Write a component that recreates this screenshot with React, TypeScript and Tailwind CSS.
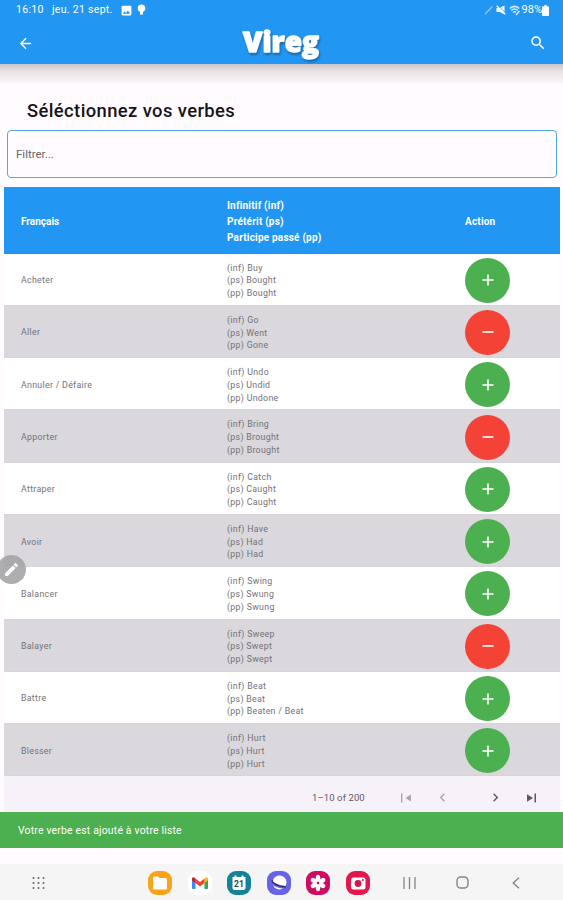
import { MdArrowBack, MdChevronLeft, MdChevronRight, MdEdit, MdImage, MdSearch } from "react-icons/md";

const verbs = [
  { fr: "Acheter", inf: "Buy", ps: "Bought", pp: "Bought", added: false },
  { fr: "Aller", inf: "Go", ps: "Went", pp: "Gone", added: true },
  { fr: "Annuler / Défaire", inf: "Undo", ps: "Undid", pp: "Undone", added: false },
  { fr: "Apporter", inf: "Bring", ps: "Brought", pp: "Brought", added: true },
  { fr: "Attraper", inf: "Catch", ps: "Caught", pp: "Caught", added: false },
  { fr: "Avoir", inf: "Have", ps: "Had", pp: "Had", added: false },
  { fr: "Balancer", inf: "Swing", ps: "Swung", pp: "Swung", added: false },
  { fr: "Balayer", inf: "Sweep", ps: "Swept", pp: "Swept", added: true },
  { fr: "Battre", inf: "Beat", ps: "Beat", pp: "Beaten / Beat", added: false },
  { fr: "Blesser", inf: "Hurt", ps: "Hurt", pp: "Hurt", added: false },
];

function StatusBar() {
  return (
    <div className="flex h-5 items-center justify-between pl-4 pr-[14px] text-[10.5px]">
      <div className="flex items-center">
        <span className="w-9 whitespace-nowrap tracking-[0.3px]">16:10</span>
        <span className="w-[68px] whitespace-nowrap tracking-[0.3px]">jeu. 21 sept.</span>
        <MdImage size={13} />
        <svg className="ml-1" width="9" height="12" viewBox="0 0 9 12" fill="currentColor">
          <circle cx="4.5" cy="4.3" r="3.8" />
          <path d="M3 7h3v3.6H3z" />
        </svg>
      </div>
      <div className="flex items-center">
        <svg width="10" height="10" viewBox="0 0 10 10" stroke="currentColor" strokeWidth="1.2" opacity="0.5">
          <path d="M1 9 8.5 1.5" />
        </svg>
        <svg className="ml-[2px]" width="10" height="10" viewBox="0 0 10 10" fill="currentColor">
          <path d="M.5 3h2.8L8.5.5v9L4 7H.5z" />
          <path d="M1.5 0 10 8.5" stroke="#2196f3" strokeWidth="1" />
          <path d="M.7.8 9.3 9.3" stroke="currentColor" strokeWidth="1.2" />
        </svg>
        <svg className="ml-[3px]" width="12" height="11" viewBox="0 0 12 11" fill="none" stroke="currentColor" strokeWidth="1.5" opacity="0.8">
          <path d="M.7 3.5Q5.5-.8 10.3 3.5M2.3 5.4q3.2-2.7 6.4 0M4 7.3q1.5-1.2 3 0" />
          <path d="m7 10 3.5-4" />
        </svg>
        <span className="ml-px text-[11px]">98%</span>
        <svg width="7" height="11" viewBox="0 0 6 11" preserveAspectRatio="none" fill="currentColor">
          <path d="M2 0h2v1.2h1q1 0 1 1V10q0 1-1 1H1q-1 0-1-1V2.2q0-1 1-1h1z" />
        </svg>
      </div>
    </div>
  );
}

function Header() {
  return (
    <header className="h-16 shrink-0 bg-[#2196f3] text-white">
      <StatusBar />
      <div className="flex h-[46px] items-center justify-between pl-[17px] pr-4">
        <MdArrowBack size={17} />
        <svg
          className="overflow-visible drop-shadow-[1px_2px_1px_rgba(20,70,120,0.6)]"
          width="84"
          height="36"
          viewBox="0 0 84 36"
        >
          <text
            x="3"
            y="27"
            textLength="76"
            lengthAdjust="spacing"
            className="fill-white stroke-white font-['Open_Sans'] text-[28px] font-extrabold"
            strokeWidth="1.4"
            strokeLinejoin="round"
          >
            Vireg
          </text>
        </svg>
        <MdSearch size={18} />
      </div>
    </header>
  );
}

function ActionButton({ added }: { added: boolean }) {
  return (
    <button
      className={`flex size-[45px] items-center justify-center rounded-full ${added ? "bg-[#f44336]" : "bg-[#4caf50]"}`}
      aria-label={added ? "Retirer" : "Ajouter"}
    >
      <svg width="12" height="12" viewBox="0 0 12 12" stroke="#fff" strokeWidth="1.6">
        <path d={added ? "M.5 6h11" : "M.5 6h11M6 .5v11"} />
      </svg>
    </button>
  );
}

function Pagination() {
  return (
    <div className="flex h-9 items-center bg-[#f7f2fa] pt-[7px] pl-[308px] text-[#5c5a5f]">
      <span className="w-[89px] text-[9.5px] tracking-[0.1px]">1–10 of 200</span>
      <svg className="opacity-50" width="11" height="10" viewBox="0 0 11 10" fill="currentColor">
        <path d="M0 .5h1.4v9H0zM10 1.5v7L4.5 5z" />
      </svg>
      <MdChevronLeft className="ml-[22px] opacity-50" size={17} />
      <MdChevronRight className="ml-[36px]" size={17} />
      <svg className="ml-[22px]" width="11" height="10" viewBox="0 0 11 10" fill="currentColor">
        <path d="M1 1.2v7.6L7 5zM8.5.5H10v9H8.5z" />
      </svg>
    </div>
  );
}

function VerbTable() {
  return (
    <div className="ml-1 mr-[3px] mt-[9px] shrink-0">
      <div className="grid h-[66.5px] grid-cols-[206px_238px_1fr] items-center bg-[#2196f3] pl-[17px] pt-[3px] text-[10px] font-bold text-white">
        <span>Français</span>
        <div className="leading-[15.7px] tracking-[0.2px]">
          <p>Infinitif (inf)</p>
          <p>Prétérit (ps)</p>
          <p>Participe passé (pp)</p>
        </div>
        <span className="tracking-[0.2px]">Action</span>
      </div>
      <div>
        {verbs.map((v) => (
          <div
            key={v.fr}
            className="grid h-[52.3px] grid-cols-[206px_238px_1fr] items-center border-b border-[#d6d3d9] pl-[17px] pt-[2px] text-[8.8px] text-[#747177] odd:bg-white even:bg-[#dad8dd]"
          >
            <span className="pt-px tracking-[0.3px]">{v.fr}</span>
            <div className="pt-px leading-[12.7px] tracking-[0.3px]">
              <p>(inf) {v.inf}</p>
              <p>(ps) {v.ps}</p>
              <p>(pp) {v.pp}</p>
            </div>
            <ActionButton added={v.added} />
          </div>
        ))}
      </div>
      <Pagination />
    </div>
  );
}

function FilesIcon() {
  return (
    <svg width="24" height="24" viewBox="0 0 24 24">
      <rect width="24" height="24" rx="9" fill="#f8a51b" />
      <path d="M5 7q0-1.5 1.5-1.5h3.5l1.5 1.5h6q1.5 0 1.5 1.5v8.5q0 1.5-1.5 1.5h-11q-1.5 0-1.5-1.5z" fill="#fff" />
    </svg>
  );
}

function GmailIcon() {
  return (
    <svg width="24" height="24" viewBox="0 0 24 24">
      <rect width="24" height="24" rx="9" fill="#fff" />
      <path d="M4 8v9q0 1 1 1h2.500V9.5z" fill="#4285f4" />
      <path d="M20 8v9q0 1-1 1h-2.500V9.5z" fill="#34a853" />
      <path d="M7.5 7.5 12 11l4.5-3.5V12L12 15.5 7.5 12z" fill="#ea4335" />
      <path d="M4 8q0-2.3 2.2-1.5L7.5 7.5V12L4 9.3z" fill="#c5221f" />
      <path d="M20 8q0-2.3-2.2-1.5l-1.3 1V12L20 9.3z" fill="#fbbc04" />
    </svg>
  );
}

function CalendarIcon() {
  return (
    <svg width="24" height="24" viewBox="0 0 24 24">
      <rect width="24" height="24" rx="9" fill="#148399" />
      <path d="M5.5 6h2V4.5h2V6h5V4.5h2V6h2v11q0 2-2 2h-9q-2 0-2-2z" fill="#fff" />
      <text x="12" y="15.5" textAnchor="middle" className="fill-[#26454d] text-[8.5px] font-bold">21</text>
    </svg>
  );
}

function InternetIcon() {
  return (
    <svg width="24" height="24" viewBox="0 0 24 24">
      <rect width="24" height="24" rx="9" fill="#6663e8" />
      <circle cx="12.5" cy="11.5" r="7" fill="#fff" />
      <path d="M5 8.5Q2.5 10 7 13t11.5 3.5" fill="none" stroke="#6663e8" strokeWidth="2.8" />
      <path d="M5.5 9Q4 10.5 8 13t11 3" fill="none" stroke="#27246d" strokeWidth="1.2" />
    </svg>
  );
}

function GalleryIcon() {
  return (
    <svg width="24" height="24" viewBox="0 0 24 24">
      <rect width="24" height="24" rx="9" fill="#cf0a62" />
      <g fill="#fff">
        {[0, 60, 120, 180, 240, 300].map((angle) => (
          <ellipse key={angle} cx="12" cy="7.4" rx="2.3" ry="3.6" transform={`rotate(${angle} 12 12)`} />
        ))}
      </g>
      <circle cx="12" cy="12" r="1.2" fill="#cf0a62" />
    </svg>
  );
}

function CameraIcon() {
  return (
    <svg width="24" height="24" viewBox="0 0 24 24">
      <rect width="24" height="24" rx="9" fill="#e31650" />
      <rect x="5" y="6.5" width="14.5" height="12" rx="2.5" fill="#fff" />
      <circle cx="12" cy="12.5" r="3.4" fill="#d3164c" />
      <circle cx="16.8" cy="8.9" r="1" fill="#e31650" />
    </svg>
  );
}

function NavBar() {
  return (
    <nav className="flex h-9 shrink-0 items-center bg-[#f5f5f5] pt-[2px] text-[#858585]">
      <svg className="ml-[32px] mr-[103px]" width="13" height="12" viewBox="0 0 13 12" fill="#666">
        {[1.5, 6.5, 11.5].map((x) => [1, 6, 11].map((y) => <circle key={`${x}-${y}`} cx={x} cy={y} r="1" />))}
      </svg>
      <div className="flex gap-[15.5px]">
        <FilesIcon />
        <GmailIcon />
        <CalendarIcon />
        <InternetIcon />
        <GalleryIcon />
        <CameraIcon />
      </div>
      <svg className="ml-[33px]" width="13" height="12" viewBox="0 0 13 12" stroke="currentColor" strokeWidth="1.3">
        <path d="M1 0v12M6.5 0v12M12 0v12" />
      </svg>
      <svg className="ml-[40px]" width="13" height="13" viewBox="0 0 13 13" fill="none" stroke="currentColor" strokeWidth="1.4">
        <rect x="1" y="1" width="11" height="11" rx="3.8" />
      </svg>
      <svg className="ml-[43px]" width="8" height="12" viewBox="0 0 8 12" fill="none" stroke="currentColor" strokeWidth="1.4">
        <path d="M7 .7 1.2 6 7 11.3" />
      </svg>
    </nav>
  );
}

export default function App() {
  return (
    <div className="relative flex h-[900px] w-full flex-col overflow-hidden bg-[#fffbff] font-['Roboto',sans-serif]">
      <Header />
      <div className="h-[19px] shrink-0 bg-linear-to-b from-[#cbc5c6] via-[#e9e3e5] via-40% to-[#fbf5f8]" />
      <h1 className="ml-[27px] mt-[17px] shrink-0 text-[18.4px] font-medium leading-[22px] tracking-[0.4px] text-[#161418]">
        Séléctionnez vos verbes
      </h1>
      <div className="ml-[7px] mr-[6px] mt-2 flex h-12 shrink-0 items-center rounded border-[1.5px] border-[#54a6ea] pt-[2px] pl-[8px] text-[11.5px] text-[#666]">
        Filtrer...
      </div>
      <VerbTable />
      {/* Snackbar */}
      <div className="flex h-[35.5px] shrink-0 items-center bg-[#4caf50] pl-[18px] pt-px text-[10.4px] tracking-[0.2px] text-white">
        Votre verbe est ajouté à votre liste
      </div>
      <div className="h-4 shrink-0" />
      <NavBar />

      {/* Floating pen handle */}
      <div className="absolute top-[555px] -left-[3px] flex size-[29px] items-center justify-center rounded-full bg-[#a5a4a6]/90 text-white">
        <MdEdit size={17} />
      </div>
    </div>
  );
}
